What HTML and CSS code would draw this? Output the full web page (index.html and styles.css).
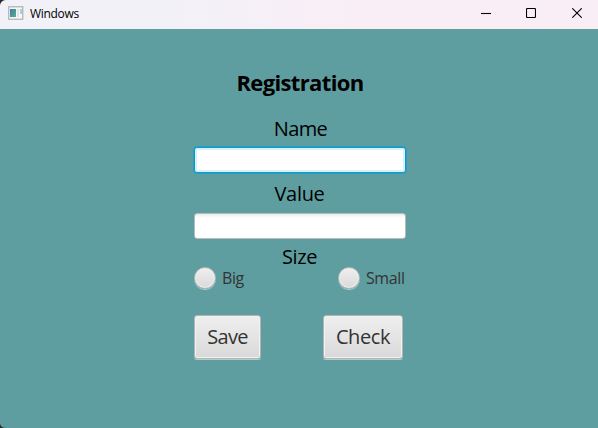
FILE: index.html
```html
<!DOCTYPE html>
<html lang="en">
<head>
<meta charset="utf-8">
<title>Windows</title>
<link rel="stylesheet" href="styles.css">
</head>
<body>
<div class="window">
  <header class="titlebar">
    <svg class="app-icon" width="16" height="14" viewBox="0 0 16 14">
      <defs><linearGradient id="pane" x1="0" y1="0" x2="1" y2="1"><stop offset="0" stop-color="#4079b4"/><stop offset="1" stop-color="#58b07c"/></linearGradient></defs>
      <rect x=".75" y=".75" width="14" height="12.5" fill="#f6f7f8" stroke="#b0b6bb" stroke-width="1.3"/>
      <rect x="2" y="3" width="6" height="8" fill="url(#pane)"/>
      <rect x="9" y="3" width="2" height="8" fill="#dfe4e6"/>
      <rect x="12" y="3" width="2" height="5" fill="#a8d3cf"/>
    </svg>
    <span class="title">Windows</span>
    <div class="controls">
      <svg width="10" height="10" viewBox="0 0 10 10"><path d="M0 5.5h10"/></svg>
      <svg width="10" height="10" viewBox="0 0 10 10"><rect x=".5" y=".5" width="9" height="9" rx="1"/></svg>
      <svg width="10" height="10" viewBox="0 0 10 10"><path d="M.3.3l9.4 9.4M9.7.3L.3 9.7"/></svg>
    </div>
  </header>
  <main class="content">
    <form class="form">
      <h1 class="heading">Registration</h1>
      <label class="label name-label" for="name">Name</label>
      <input class="field focused" id="name" type="text">
      <label class="label value-label" for="value">Value</label>
      <input class="field" id="value" type="text">
      <div class="label size-label">Size</div>
      <div class="options">
        <label class="option"><input class="radio" type="radio" name="size"><span class="big">Big</span></label>
        <label class="option"><input class="radio" type="radio" name="size"><span class="small">Small</span></label>
      </div>
      <div class="actions">
        <button class="button save" type="button"><span>Save</span></button>
        <button class="button check" type="button"><span>Check</span></button>
      </div>
    </form>
  </main>
</div>
</body>
</html>
```
FILE: styles.css
```css
* { box-sizing: border-box; }
body {
  margin: 0;
  background: #2b2b2b;
  font-family: "Segoe UI", "Open Sans", "Noto Sans", sans-serif;
  color: #000;
}
.window {
  height: 428px;
  display: flex;
  flex-direction: column;
  overflow: hidden;
  border-radius: 6px 0 0 5px;
  background: #5f9ea0;
}
.titlebar {
  flex: 0 0 29px;
  display: flex;
  align-items: center;
  padding: 0 16px 3px 8px;
  background: linear-gradient(90deg, #f2f1f8 0%, #f2f1f8 25%, #f9eef6 60%, #f9eef6 100%);
}
.title {
  margin-left: 6px;
  font-size: 12px;
  line-height: 16px;
  letter-spacing: -0.3px;
  position: relative;
  top: 1px;
}
.controls {
  margin-left: auto;
  display: flex;
  gap: 35px;
}
.controls svg { display: block; fill: none; stroke: #000; stroke-width: 1.1; }
.controls svg:last-child { margin-left: 1px; }
.form {
  width: 212px;
  margin: 0 0 0 194px;
  display: flex;
  flex-direction: column;
}
.heading {
  margin: 38px 0 0;
  font-size: 22px;
  line-height: 30px;
  font-weight: 700;
  text-align: center;
  letter-spacing: -0.65px;
}
.label {
  font-size: 20px;
  line-height: 26px;
  height: 26px;
  text-align: center;
}
.name-label { margin-top: 19px; letter-spacing: -0.6px; margin-left: 1px; }
.value-label { margin-top: 8px; letter-spacing: -0.3px; margin-right: 1px; }
.size-label { margin-top: 5px; letter-spacing: -0.4px; margin-right: 1px; }
.field {
  width: 212px;
  height: 26px;
  margin-top: 5px;
  padding: 4px 7px;
  border: 1px solid #b6bbbc;
  border-radius: 3px;
  outline: none;
  background: linear-gradient(#ececec, #fff 4px);
}
#value { margin-top: 6px; }
.focused {
  border-color: #039ed3;
  background: #fff;
  box-shadow: 0 0 0 .5px #039ed3, inset 0 0 0 2px #d9f0f9;
}
.options {
  display: flex;
  justify-content: space-between;
  margin: -4px 2px 0 0;
}
.option {
  display: flex;
  align-items: center;
  gap: 6px;
  height: 23px;
  font-size: 16px;
  line-height: 22px;
  color: #333;
}
.big { letter-spacing: -0.4px; }
.small { width: 38px; letter-spacing: -0.4px; }
.radio {
  appearance: none;
  width: 22px;
  height: 22px;
  margin: 0;
  border: 1px solid #b4b7b7;
  border-radius: 50%;
  background: linear-gradient(#efefef, #d9d9d9);
  box-shadow: 0 1px 0 #a9c8c8, inset 0 0 0 1px #f0f0f0;
}
.actions {
  display: flex;
  justify-content: space-between;
  margin: 26px 3px 0 0;
}
.button {
  height: 44px;
  padding: 0;
  border: 1px solid #b4b4b4;
  border-radius: 3px;
  background: linear-gradient(#efefef, #d9d9d9);
  box-shadow: 0 1px 0 #b5cbcb, inset 0 0 0 1px #f1f1f1;
  font: 20px/26px "Segoe UI", "Open Sans", "Noto Sans", sans-serif;
  color: #333;
}
.save { width: 67px; letter-spacing: -0.7px; }
.check { width: 80px; letter-spacing: -0.4px; }
```
